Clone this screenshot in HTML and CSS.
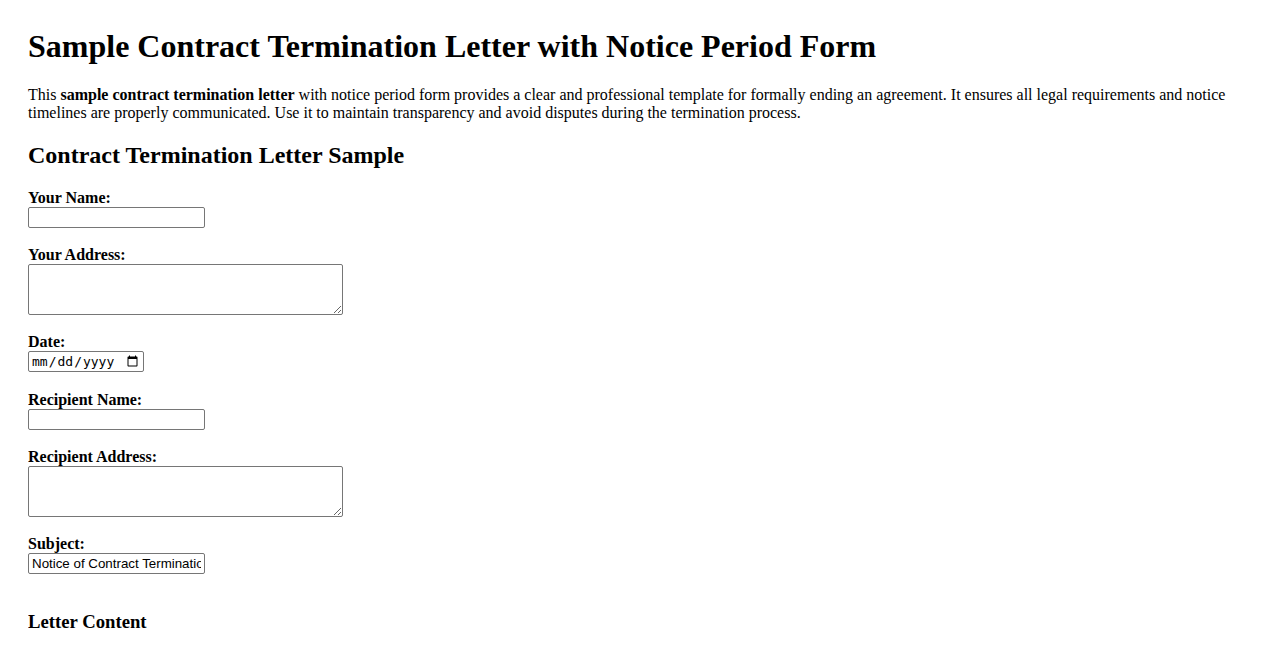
FILE: index.html
```html
<!DOCTYPE html>
<html lang="en">
<head>
<meta charset="utf-8">
<title>Sample Contract Termination Letter with Notice Period Form</title>
<link rel="stylesheet" href="styles.css">
</head>
<body>
<h1 class="page-title">Sample Contract Termination Letter with Notice Period Form</h1>
<p>This <strong>sample contract termination letter</strong> with notice period form provides a clear and professional template for formally ending an agreement. It ensures all legal requirements and notice timelines are properly communicated. Use it to maintain transparency and avoid disputes during the termination process.</p>
<h2>Contract Termination Letter Sample</h2>
<form class="letter-form">
<label for="yourName">Your Name:</label><br>
<input class="text-field" type="text" id="yourName"><br><br>
<label for="yourAddress">Your Address:</label><br>
<textarea class="area-field" id="yourAddress"></textarea><br><br>
<label for="date">Date:</label><br>
<input class="date-field" type="date" id="date"><br><br>
<label for="recipientName">Recipient Name:</label><br>
<input class="text-field" type="text" id="recipientName"><br><br>
<label for="recipientAddress">Recipient Address:</label><br>
<textarea class="area-field" id="recipientAddress"></textarea><br><br>
<label for="subject">Subject:</label><br>
<input class="text-field" type="text" id="subject" value="Notice of Contract Termination"><br><br>
<h3>Letter Content</h3>
</form>
</body>
</html>
```
FILE: styles.css
```css
html {
  overflow: hidden;
}
body {
  margin: 28px;
  font-family: "Liberation Serif", "Times New Roman", serif;
  font-size: 16px;
  color: #000;
  background: #fff;
}
.page-title {
  margin-top: 0;
}
label {
  font-weight: bold;
}
.text-field {
  box-sizing: border-box;
  width: 177px;
  height: 21px;
  font-family: "Liberation Sans", Arial, sans-serif;
  font-size: 13.333px;
  padding: 1px 3px;
  border: 1px solid #767676;
  border-radius: 2px;
  color: #000;
}
.area-field {
  box-sizing: border-box;
  width: 315px;
  height: 51px;
  border: 1px solid #767676;
  border-radius: 2px;
  vertical-align: bottom;
}
.date-field {
  box-sizing: border-box;
  width: 116px;
  height: 21px;
  margin-bottom: 1px;
  font-size: 13px;
  border: 1px solid #767676;
  border-radius: 2px;
  padding: 1px 2px;
}
```
